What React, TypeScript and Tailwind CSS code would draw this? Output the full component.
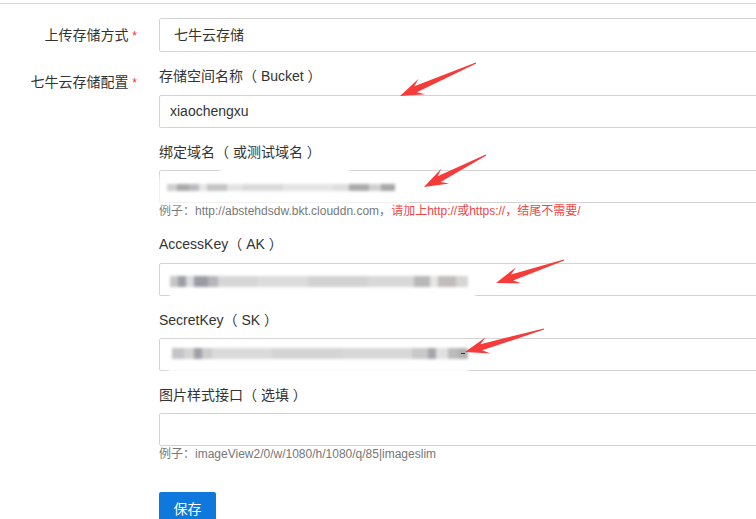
import React from "react";

// blurred (masked) value segments, left to right
const domainBlur = [
  "w-[10px] bg-[#cfcfcf]",
  "w-[12px] bg-[#a9a9a9]",
  "w-[10px] bg-[#b8b8c0]",
  "w-[8px] bg-[#e6e6e6]",
  "w-[20px] bg-[#c4c4c4]",
  "w-[16px] bg-[#e2e2e2]",
  "w-[40px] bg-[#d9d9d9]",
  "w-[50px] bg-[#e4e4e4]",
  "w-[16px] bg-[#dedede]",
  "w-[20px] bg-[#aaaaaa]",
  "w-[12px] bg-[#d0d0d0]",
  "w-[14px] bg-[#a6a6a6]",
];

const akBlur = [
  "w-[8px] bg-[#c6c6c6]",
  "w-[8px] bg-[#9d9da5]",
  "w-[8px] bg-[#d8dcdc]",
  "w-[14px] bg-[#9b9ba3]",
  "w-[10px] bg-[#b5b5bb]",
  "w-[40px] bg-[#d6d6d6]",
  "w-[50px] bg-[#dcdcdc]",
  "w-[60px] bg-[#d2d2d2]",
  "w-[46px] bg-[#d8d8d8]",
  "w-[16px] bg-[#b8b8b8]",
  "w-[8px] bg-[#e6e6e6]",
  "w-[18px] bg-[#c2bcbc]",
  "w-[12px] bg-[#d6d6d6]",
];

const skBlur = [
  "w-[12px] bg-[#c4c4c8]",
  "w-[10px] bg-[#d4d4d4]",
  "w-[8px] bg-[#9f9fa5]",
  "w-[10px] bg-[#cccccc]",
  "w-[60px] bg-[#dadada]",
  "w-[70px] bg-[#d4d4d4]",
  "w-[70px] bg-[#d8d8d8]",
  "w-[16px] bg-[#c8c8c8]",
  "w-[8px] bg-[#a5a5ad]",
  "w-[12px] bg-[#e0e0e0]",
  "w-[10px] bg-[#bbbbbb]",
  "w-[10px] bg-[#b2b2b2]",
];

function Blur({ segs }: { segs: string[] }) {
  return (
    <div className="flex h-full blur-[1.5px]">
      {segs.map((c, i) => (
        <div key={i} className={`h-full ${c}`} />
      ))}
    </div>
  );
}

type Pt = [number, number];

function arrowPoints(tail: Pt, tip: Pt) {
  const dx = tip[0] - tail[0];
  const dy = tip[1] - tail[1];
  const len = Math.hypot(dx, dy);
  const d: Pt = [dx / len, dy / len];
  const n: Pt = [-d[1], d[0]];
  const at = (back: number, side: number): Pt => [
    tip[0] - d[0] * back + n[0] * side,
    tip[1] - d[1] * back + n[1] * side,
  ];
  const pts: Pt[] = [
    [tail[0] + n[0] * 0.6, tail[1] + n[1] * 0.6],
    at(17, 3.2),
    at(24, 8.5),
    tip,
    at(24, -8.5),
    at(17, -3.2),
    [tail[0] - n[0] * 0.6, tail[1] - n[1] * 0.6],
  ];
  return pts.map((p) => p.join(",")).join(" ");
}

const arrows: [Pt, Pt][] = [
  [[476, 63], [400, 96]],
  [[486, 155], [424, 187]],
  [[564, 260], [496, 283]],
  [[544, 329], [465, 352]],
];

function Label({ text, className = "" }: { text: string; className?: string }) {
  return (
    <div className={`h-[20px] text-[14px] leading-[20px] text-[#333] ${className}`}>
      {text}
    </div>
  );
}

function Input({
  value,
  className = "",
  children,
}: {
  value?: string;
  className?: string;
  children?: React.ReactNode;
}) {
  return (
    <div
      className={`relative h-[33px] w-[640px] rounded-[2px] border border-[#d4d4d4] bg-white pl-[10px] text-[14px] leading-[31px] text-[#333] ${className}`}
    >
      {value}
      {children}
    </div>
  );
}

export default function App() {
  return (
    <div className="relative h-[519px] w-full overflow-hidden bg-white font-['Liberation_Sans','Noto_Sans_CJK_SC',sans-serif]">
      <div className="h-[4px] border-b border-[#d9d9d9]" />

      <div className="pt-[14px]">
        {/* 上传存储方式 */}
        <div className="flex">
          <div className="w-[159px] shrink-0 pr-[22px] text-right text-[14px] leading-[34px] text-[#333]">
            上传存储方式 <span className="text-[12px] text-[#e33]">*</span>
          </div>
          <div className="h-[34px] w-[640px] shrink-0 rounded-[2px] border border-[#d4d4d4] pl-[14px] text-[14px] leading-[32px] text-[#333]">
            七牛云存储
          </div>
        </div>

        {/* 七牛云存储配置 */}
        <div className="mt-[13px] flex">
          <div className="w-[159px] shrink-0 pr-[22px] pt-[6px] text-right text-[14px] leading-[20px] text-[#333]">
            七牛云存储配置 <span className="text-[12px] text-[#e33]">*</span>
          </div>
          <div className="w-[640px] shrink-0">
            <Label text="存储空间名称（ Bucket ）" className="mb-[9px]" />
            <Input value="xiaochengxu" />

            <Label text="绑定域名（ 或测试域名 ）" className="mb-[8px] mt-[14px]" />
            <Input>
              <div className="absolute left-[60px] top-[-7px] h-[16px] w-[130px] rounded-full bg-white blur-[2px]" />
              <div className="absolute left-[-2px] top-[6px] h-[28px] w-[250px] bg-white/80 blur-[2px]" />
              <div className="absolute left-[7px] top-[13px] h-[7px]">
                <Blur segs={domainBlur} />
              </div>
            </Input>
            <div className="text-[12px] leading-[17px] text-[#777]">
              例子：http://abstehdsdw.bkt.clouddn.com，
              <span className="text-[#f04646]">请加上http://或https://，结尾不需要/</span>
            </div>

            <Label text="AccessKey（ AK ）" className="mb-[9px] mt-[14px]" />
            <Input>
              <div className="absolute left-[10px] top-[4px] h-[30px] w-[305px] bg-white blur-[1px]" />
              <div className="absolute left-[10px] top-[12px] h-[11px]">
                <Blur segs={akBlur} />
              </div>
            </Input>

            <Label text="SecretKey（ SK ）" className="mb-[8px] mt-[14px]" />
            <Input>
              <div className="absolute left-[8px] top-[2px] h-[32px] w-[300px] bg-white/90 blur-[1.5px]" />
              <div className="absolute left-[12px] top-[9px] h-[11px]">
                <Blur segs={skBlur} />
              </div>
              <div className="absolute left-[301px] top-[14px] h-[1px] w-[4px] bg-[#333]" />
            </Input>

            <Label text="图片样式接口（ 选填 ）" className="mb-[8px] mt-[14px]" />
            <Input />
            <div className="text-[12px] leading-[17px] text-[#777]">
              例子：imageView2/0/w/1080/h/1080/q/85|imageslim
            </div>

            <button className="mt-[29px] h-[34px] w-[57px] rounded-[2px] bg-[#0f78dc] text-[14px] text-white">
              保存
            </button>
          </div>
        </div>
      </div>

      <svg className="pointer-events-none absolute left-0 top-0" width="756" height="519">
        {arrows.map(([tail, tip], i) => (
          <polygon key={i} points={arrowPoints(tail, tip)} fill="#f63b3b" />
        ))}
      </svg>
    </div>
  );
}
